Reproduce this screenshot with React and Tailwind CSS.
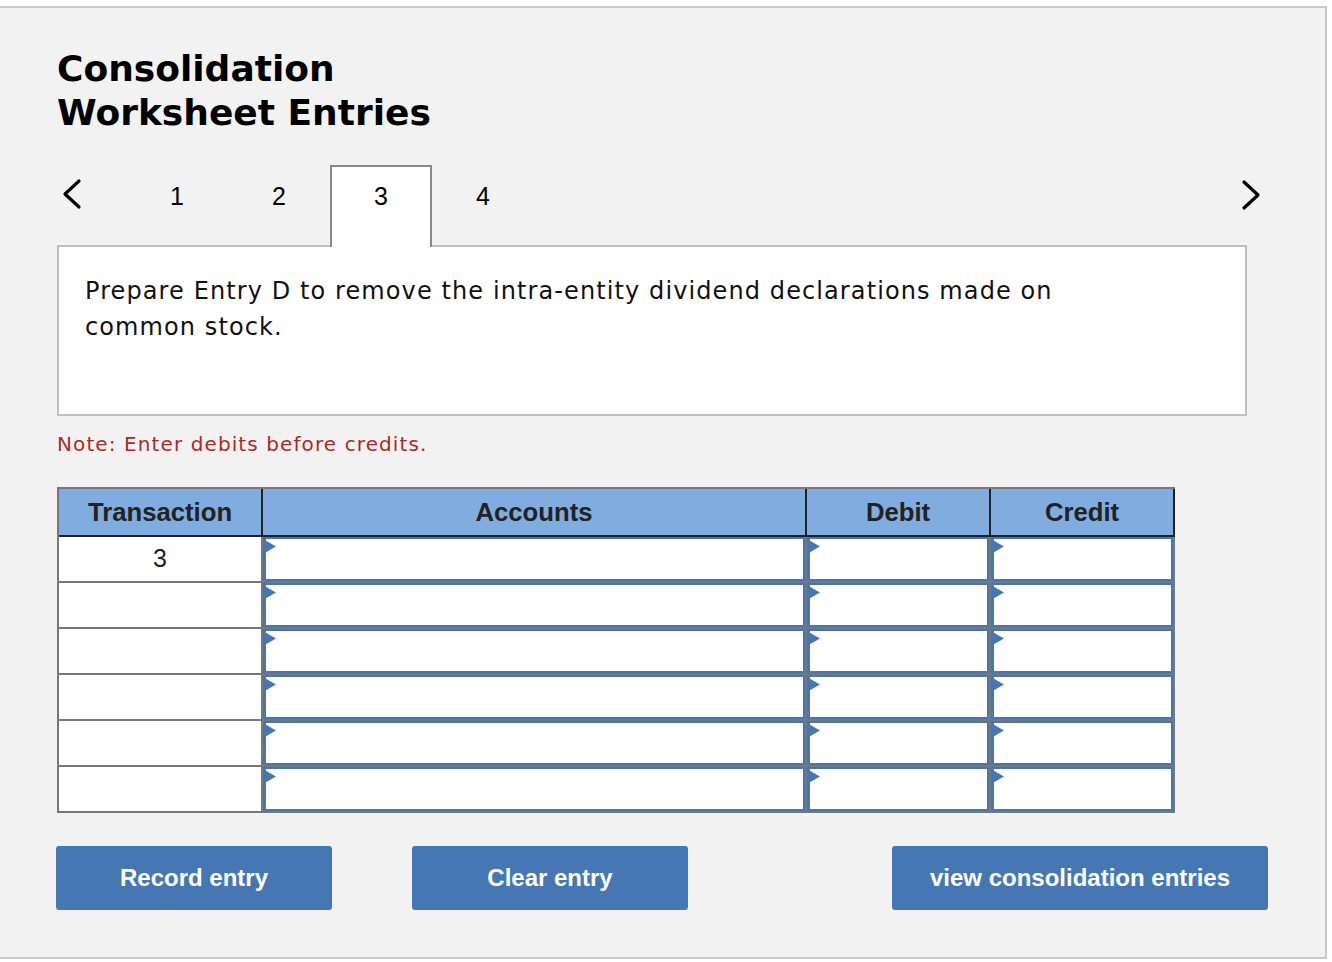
import React from "react";

const BLUE = "#4677b3";

const Chevron = ({ dir }) => (
  <svg width="24" height="32" viewBox="0 0 24 32" fill="none">
    <path
      d={dir === "left" ? "M19 3 L5 16 L19 29" : "M5 3 L19 16 L5 29"}
      stroke="#000"
      strokeWidth="3.2"
      strokeLinecap="round"
      strokeLinejoin="round"
    />
  </svg>
);

const EntryCell = ({ width }) => (
  <div className={`h-full border-r-2 border-[#777] ${width}`}>
    <div className="relative h-full border-2 border-l-[3px] border-[#4677b3] bg-white">
      <svg
        className="absolute left-[-3px] top-0"
        width="13"
        height="15"
        viewBox="0 0 13 15"
      >
        <polygon points="0,0 13,7.5 0,15" fill={BLUE} />
      </svg>
    </div>
  </div>
);

const rows = ["3", "", "", "", "", ""];

const App = () => {
  return (
    <main className="min-h-screen bg-white">
      <div className="mt-[6px] h-[953px] w-[1327px] border-t-2 border-r-2 border-b-2 border-[#c8c8c8] bg-[#f2f2f2] pl-[57px]">
        <h1 className="mt-[39px] font-['DejaVu_Sans',sans-serif] text-[36px] font-bold leading-[44px] text-black">
          Consolidation
          <br />
          Worksheet Entries
        </h1>

        <div className="w-[1211px]">
          {/* tabs */}
          <div className="mt-[30px] flex h-[80px] items-end font-['Liberation_Sans',Arial,sans-serif] text-[25px] text-black">
            <div className="h-full w-[69px] pl-[3px] pt-[13px]">
              <Chevron dir="left" />
            </div>
            {["1", "2", "3", "4"].map((t) =>
              t === "3" ? (
                <div
                  key={t}
                  className="relative z-10 mb-[-2px] flex h-[82px] w-[102px] justify-center border-2 border-b-0 border-[#888] bg-white pt-[14px] leading-[30px]"
                >
                  {t}
                </div>
              ) : (
                <div
                  key={t}
                  className="flex h-full w-[102px] justify-center pt-[16px] leading-[30px]"
                >
                  {t}
                </div>
              )
            )}
            <div className="ml-auto h-full pr-[5px] pt-[14px]">
              <Chevron dir="right" />
            </div>
          </div>

          {/* question */}
          <div className="h-[171px] w-[1190px] border-2 border-[#c0c0c0] bg-white pl-[26px] pt-[26px] font-['DejaVu_Sans',Verdana,sans-serif] text-[24px] leading-[36px] tracking-[1.1px] text-[#111]">
            Prepare Entry D to remove the intra-entity dividend declarations made on
            <br />
            common stock.
          </div>

          <p className="mt-[14px] font-['DejaVu_Sans',Verdana,sans-serif] text-[20px] leading-[28px] tracking-[1.1px] text-[#ad2a24]">
            Note: Enter debits before credits.
          </p>

          {/* journal table */}
          <div className="mt-[29px] w-[1118px] border-l-2 border-t-2 border-[#777] font-['Liberation_Sans',Arial,sans-serif] text-[#222]">
            <div className="flex h-[48px] border-b-2 border-[#222] bg-[#80acdf] text-[25.7px] font-bold">
              <div className="flex w-[204px] items-center justify-center border-r-2 border-[#222]">
                Transaction
              </div>
              <div className="flex w-[544px] items-center justify-center border-r-2 border-[#222]">
                Accounts
              </div>
              <div className="flex w-[184px] items-center justify-center border-r-2 border-[#222]">
                Debit
              </div>
              <div className="flex w-[184px] items-center justify-center border-r-2 border-[#222]">
                Credit
              </div>
            </div>
            {rows.map((r, i) => (
              <div key={i} className="flex h-[46px] border-b-2 border-[#777]">
                <div className="flex h-full w-[204px] items-center justify-center border-r-2 border-[#777] bg-white text-[25px]">
                  {r}
                </div>
                <EntryCell width="w-[544px]" />
                <EntryCell width="w-[184px]" />
                <EntryCell width="w-[184px]" />
              </div>
            ))}
          </div>

          {/* buttons */}
          <div className="ml-[-1px] mt-[33px] flex font-['Liberation_Sans',Arial,sans-serif] text-[24px] font-bold text-white">
            <button className="h-[64px] w-[276px] rounded-[3px] bg-[#4677b3]">
              Record entry
            </button>
            <button className="ml-[80px] h-[64px] w-[276px] rounded-[3px] bg-[#4677b3]">
              Clear entry
            </button>
            <button className="ml-[204px] h-[64px] w-[376px] rounded-[3px] bg-[#4677b3]">
              view consolidation entries
            </button>
          </div>
        </div>
      </div>
    </main>
  );
};

export default App;
